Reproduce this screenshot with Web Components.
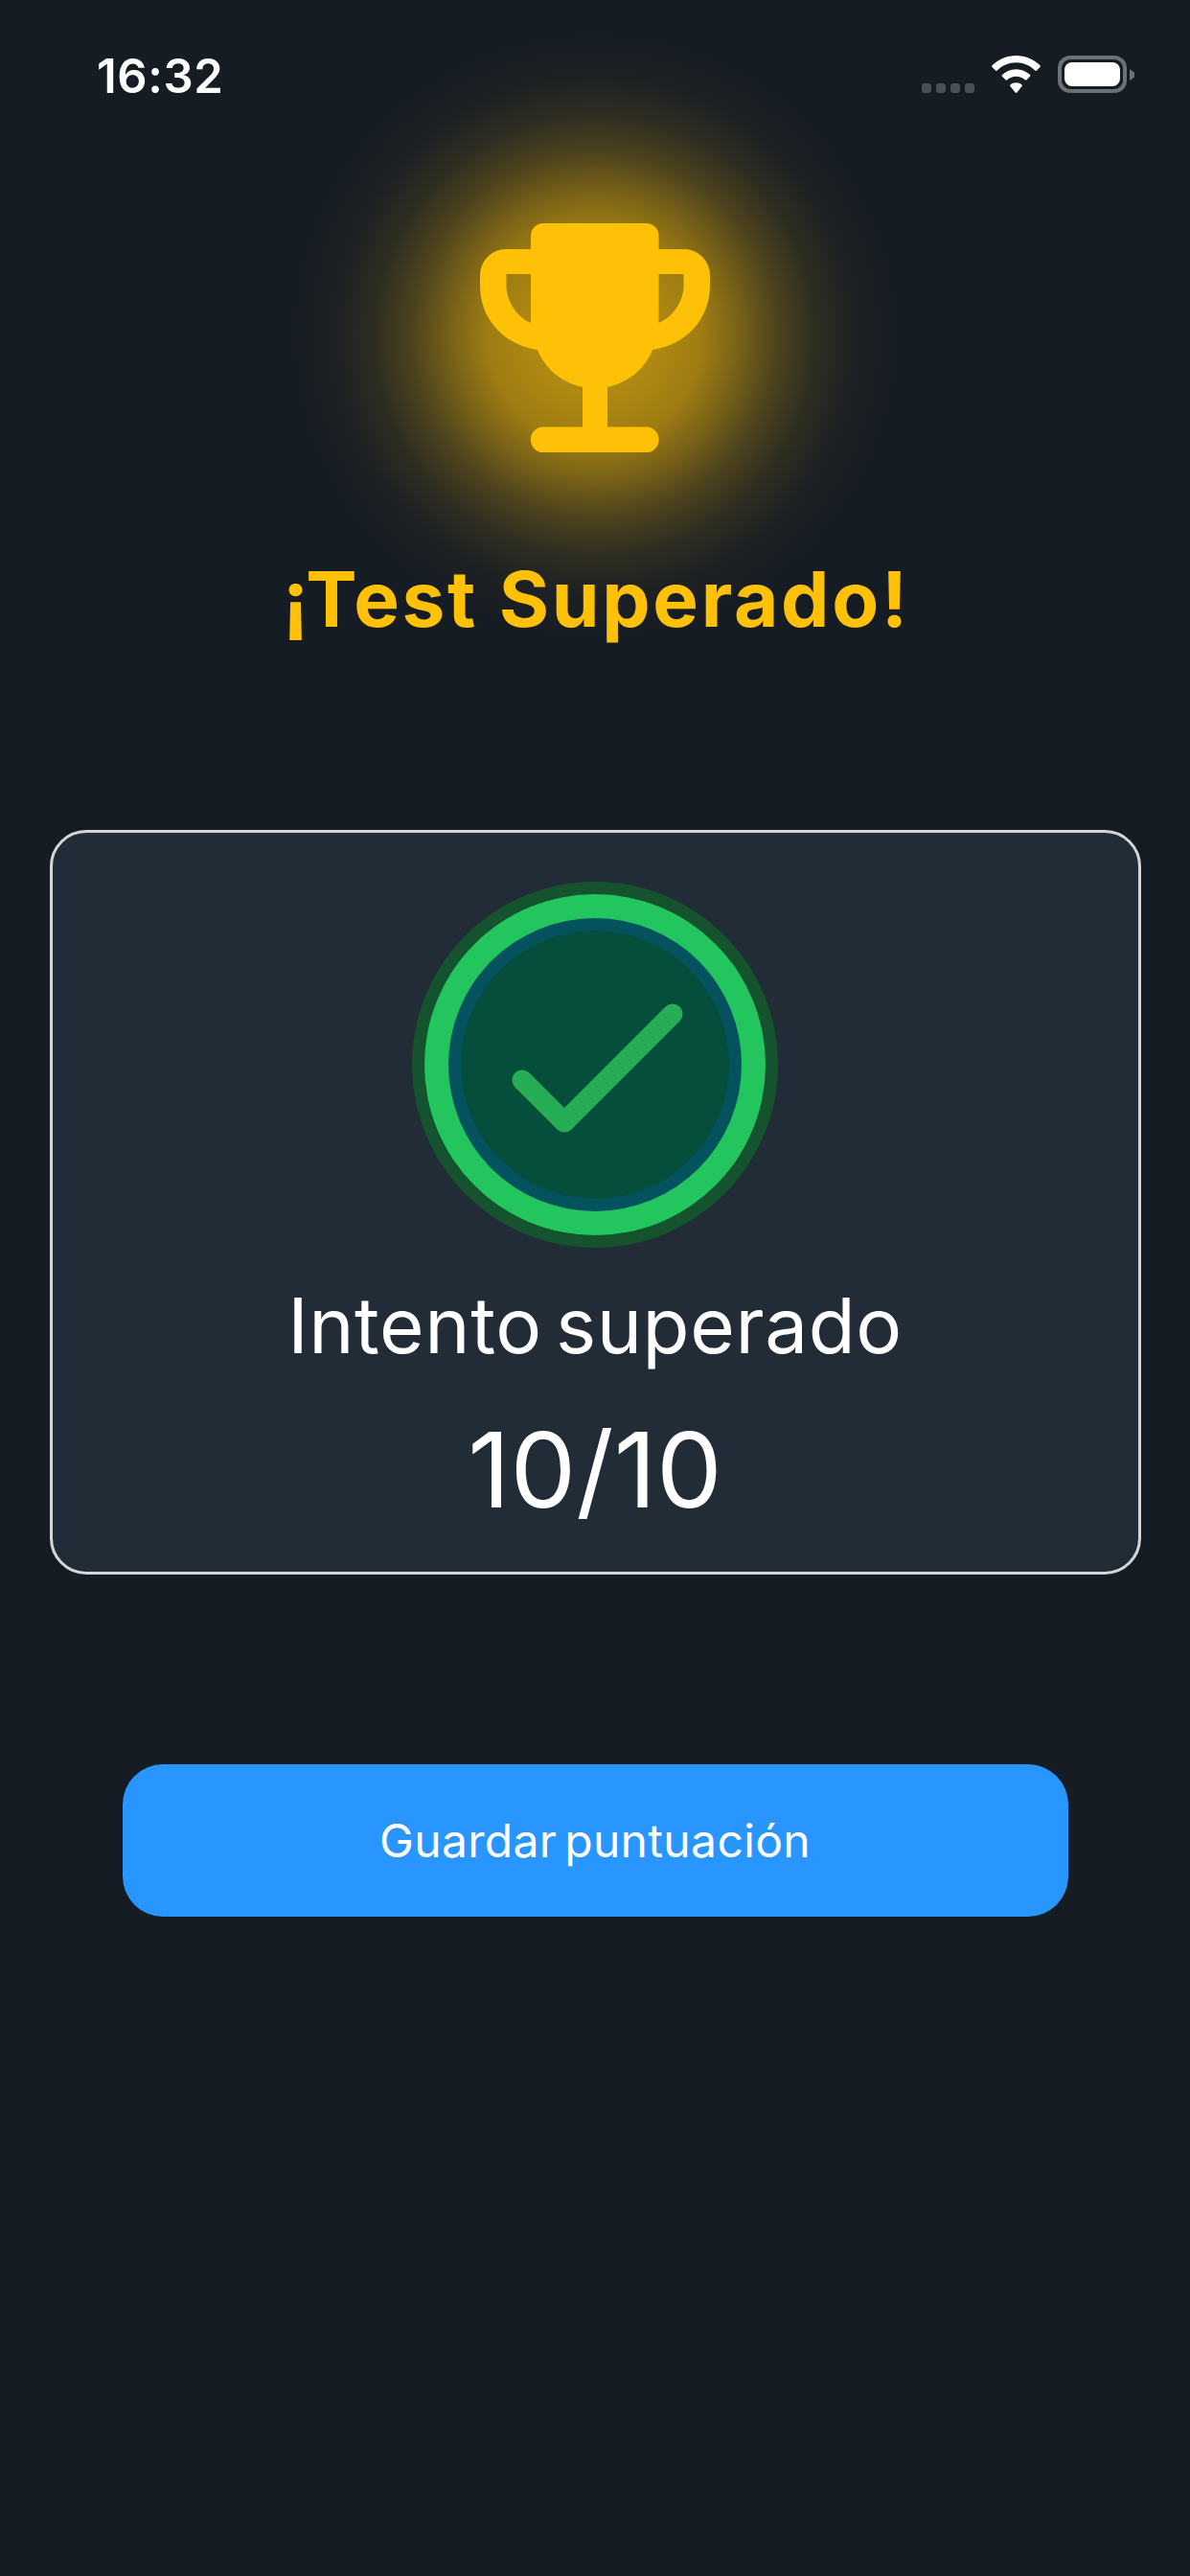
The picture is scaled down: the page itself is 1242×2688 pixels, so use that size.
<!DOCTYPE html>
<html lang="es"><head><meta charset="utf-8"><title>Test Superado</title>
<style>
html,body{margin:0;padding:0}
body{width:1242px;height:2688px;background:#161c24;font-family:Inter,"Noto Sans",sans-serif;color:#fff;display:flex;flex-direction:column;align-items:center;overflow:hidden}
</style></head><body>
<app-status-bar time="16:32"></app-status-bar>
<trophy-hero>¡Test Superado!</trophy-hero>
<result-card label="Intento superado" score="10/10"></result-card>
<primary-button>Guardar puntuación</primary-button>
<script>
function def(name,html){customElements.define(name,class extends HTMLElement{connectedCallback(){if(this.shadowRoot)return;const r=this.attachShadow({mode:'open'});r.innerHTML=html(this)}})}
def('app-status-bar',el=>`<style>
:host{display:flex;box-sizing:border-box;width:100%;height:130px;padding:54px 58px 0 101px;justify-content:space-between;align-items:flex-start;position:relative;z-index:2}
.t{font:600 49px/52px Inter,sans-serif;letter-spacing:.6px;color:#fff}
.r{display:flex;align-items:flex-start;padding-top:4px}
.dots{display:flex;gap:5px;margin:29px 18px 0 0}
.dots i{width:10px;height:10px;border-radius:3px;background:#4b4f56}
.wifi{width:51px;height:39px;margin-right:18px}
.bat{box-sizing:border-box;width:72px;height:39px;border:4px solid #6c7077;border-radius:13px;padding:3px}
.bat b{display:block;height:100%;background:#fff;border-radius:8px}
.nub{width:5px;height:12px;margin:14px 0 0 3px;background:#6c7077;clip-path:polygon(0 0,100% 30%,100% 70%,0 100%)}
</style><span class="t">${el.getAttribute('time')}</span>
<div class="r"><div class="dots"><i></i><i></i><i></i><i></i></div>
<svg class="wifi" viewBox="0 0 51 39"><path fill="#fff" d="M25.5 0C35 0 44 3.800 50.500 10.200 51 10.700 51 11.400 50.500 11.900L47 15.500C46.500 16 45.700 16 45.200 15.500 40 10.400 33 7.300 25.500 7.300S11 10.400 5.800 15.500C5.300 16 4.500 16 4 15.500L.5 11.900C0 11.400 0 10.700.5 10.200 7 3.800 16 0 25.500 0ZM25.500 14.200C31.100 14.200 36.200 16.400 40 20 40.500 20.500 40.500 21.200 40 21.700L36.500 25.300C36 25.800 35.300 25.800 34.800 25.300 32.300 23.100 29 21.700 25.500 21.700S18.700 23.100 16.200 25.300C15.700 25.800 15 25.800 14.500 25.300L11 21.700C10.500 21.200 10.500 20.500 11 20 14.800 16.400 19.900 14.200 25.500 14.200ZM25.500 28.300C27.800 28.300 29.900 29.100 31.500 30.400 32 30.900 32 31.500 31.600 32L26.400 38.500C25.900 39.100 25.100 39.100 24.600 38.500L19.400 32C19 31.500 19 30.900 19.500 30.400 21.100 29.100 23.200 28.300 25.500 28.300Z"/></svg>
<div class="bat"><b></b></div><div class="nub"></div></div>`);
def('trophy-hero',()=>`<style>
:host{display:flex;flex-direction:column;align-items:center;width:100%;position:relative}
.glow{position:absolute;left:50%;top:-100px;width:640px;height:640px;transform:translateX(-50%);border-radius:50%;
background:radial-gradient(circle closest-side,rgba(255,193,7,.66) 0,rgba(255,193,7,.66) 18.75%,rgba(255,193,7,.59) 34.7%,rgba(255,193,7,.42) 47.2%,rgba(255,193,7,.23) 59.7%,rgba(255,193,7,.1) 72.2%,rgba(255,193,7,.03) 84.7%,rgba(255,193,7,0) 100%)}
svg{position:relative;display:block;width:240px;height:240px;margin-top:103px}
h1{position:relative;margin:104px 0 0;font:700 80px/96px Inter,sans-serif;letter-spacing:2.7px;text-indent:2.7px;color:#ffc107;white-space:nowrap}
</style><div class="glow"></div>
<svg viewBox="0 0 240 240"><path fill="#ffc107" fill-rule="evenodd" d="M66 0H173.500A13 13 0 0 1 186.500 13V27H213A27 27 0 0 1 240 54V65C240 100 215 127 180 132 172 152 155 166 133 171V212.600H173.500A13.200 13.200 0 0 1 173.500 239H66A13.200 13.200 0 0 1 66 212.600H107V171C85 166 68 152 60 132 25 127 0 100 0 65V54A27 27 0 0 1 27 27H53V13A13 13 0 0 1 66 0ZM27.500 53V65C27.500 80 37 97 53 104V53ZM186.500 53V104C203 97 212.500 80 212.500 65V53Z"/></svg>
<h1><slot></slot></h1>`);
def('status-check',()=>`<style>:host{display:block;width:382px;height:382px}svg{display:block}</style>
<svg width="382" height="382" viewBox="0 0 382 382"><circle cx="191" cy="191" r="191" fill="#14532d"/><circle cx="191" cy="191" r="178" fill="#22c55e"/><circle cx="191" cy="191" r="153" fill="#05525f"/><circle cx="191" cy="191" r="140" fill="#054e3c"/><path d="M115 207 159 251 272 138" fill="none" stroke="#28ad57" stroke-width="21" stroke-linecap="round" stroke-linejoin="round"/></svg>`);
def('result-card',el=>`<style>
:host{display:flex;flex-direction:column;align-items:center;box-sizing:border-box;width:1139px;height:777px;margin-top:193px;padding-top:51px;background:#222c37;border:3px solid #d4d6d8;border-radius:38px}
.l{margin-top:33px;font:400 80px/96px Inter,sans-serif;letter-spacing:.6px;word-spacing:-9px;color:#fff;white-space:nowrap}
.s{margin-top:37px;font:400 109px/130px Inter,sans-serif;color:#fff;white-space:nowrap}
</style><status-check></status-check><div class="l">${el.getAttribute('label')}</div><div class="s">${el.getAttribute('score')}</div>`);
def('primary-button',()=>`<style>
:host{display:flex;align-items:center;justify-content:center;box-sizing:border-box;width:987px;height:159px;margin-top:198px;background:#2996ff;border-radius:42px;font:400 48px/58px Inter,sans-serif;letter-spacing:.35px;word-spacing:-6px;color:#fff;white-space:nowrap}
</style><slot></slot>`);
</script>
</body></html>
